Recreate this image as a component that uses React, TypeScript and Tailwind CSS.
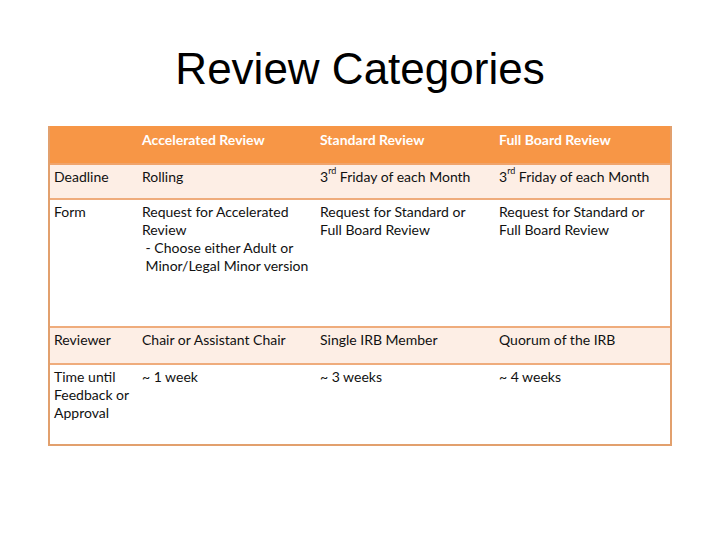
import React from "react";

type Row = {
  label: React.ReactNode;
  cells: React.ReactNode[];
  tint: boolean;
  height: string;
};

const third = (
  <>
    3<sup className="text-[9px] align-[4px]">rd</sup> Friday of each Month
  </>
);

export default function App(): JSX.Element {
  const headers = ["", "Accelerated Review", "Standard Review", "Full Board Review"];

  const rows: Row[] = [
    { label: "Deadline", cells: ["Rolling", third, third], tint: true, height: "h-[35px]" },
    {
      label: "Form",
      cells: [
        <>
          Request for Accelerated Review
          <br />
          &nbsp;- Choose either Adult or
          <br />
          <span className="whitespace-nowrap">&nbsp;Minor/Legal Minor version</span>
        </>,
        "Request for Standard or Full Board Review",
        "Request for Standard or Full Board Review",
      ],
      tint: false,
      height: "h-[128px]",
    },
    {
      label: "Reviewer",
      cells: ["Chair or Assistant Chair", "Single IRB Member", "Quorum of the IRB"],
      tint: true,
      height: "h-[37px]",
    },
    {
      label: "Time until Feedback or Approval",
      cells: ["~ 1 week", "~ 3 weeks", "~ 4 weeks"],
      tint: false,
      height: "h-[79px]",
    },
  ];

  return (
    <div className="w-[720px] h-[540px] bg-white flex flex-col items-center">
      {/* Title */}
      <h1 className="mt-[40px] h-[58px] text-[44px] leading-[58px] text-black [font-family:'Liberation_Sans',Arial,sans-serif]">
        Review Categories
      </h1>

      {/* Table */}
      <div className="mt-[28px] w-[624px] border-2 border-t-0 border-[#e2a06d] [font-family:Lato,'Open_Sans',sans-serif] text-[14px] leading-[18px] text-[#111]">
        <div className="grid grid-cols-[86px_178px_179px_177px] h-[39px] bg-[#f79646] border-b-2 border-[#f0a46c]">
          {headers.map((h, i) => (
            <div key={i} className="px-[6px] pt-[5px] font-bold text-white">
              {h}
            </div>
          ))}
        </div>
        {rows.map((r, i) => (
          <div
            key={i}
            className={`grid grid-cols-[86px_178px_179px_177px] ${r.height} ${
              r.tint ? "bg-[#fdeee5]" : "bg-white"
            } ${i < rows.length - 1 ? "border-b-2 border-[#efac7c]" : ""}`}
          >
            <div className="px-[4px] pt-[3px]">{r.label}</div>
            {r.cells.map((c, j) => (
              <div key={j} className="px-[6px] pt-[3px]">
                {c}
              </div>
            ))}
          </div>
        ))}
      </div>
    </div>
  );
}
